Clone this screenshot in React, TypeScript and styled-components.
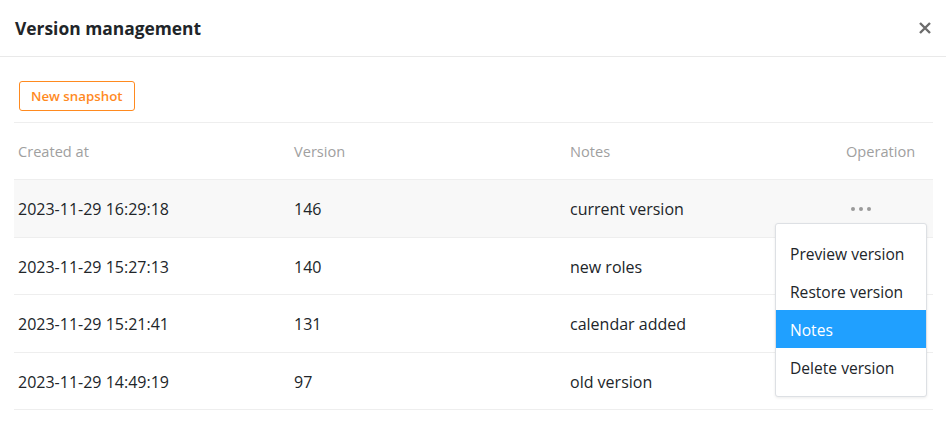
import React from "react";
import styled, { createGlobalStyle } from "styled-components";

const Global = createGlobalStyle`
  html, body { margin: 0; padding: 0; background: #fff; }
  body { font-family: "Open Sans", "Liberation Sans", sans-serif; color: #212529; }
  * { box-sizing: border-box; }
`;

const Dialog = styled.div`
  width: 946px;
  height: 427px;
  background: #fff;
  position: relative;
  overflow: hidden;
`;

const Header = styled.div`
  height: 57px;
  display: flex;
  align-items: center;
  justify-content: space-between;
  padding: 0 14px 0 15px;
  border-bottom: 1px solid #e9e9e9;
`;

const Title = styled.h1`
  margin: 0;
  font-size: 17.4px;
  font-weight: 700;
  color: #212529;
`;

const Close = styled.button`
  border: none;
  background: none;
  padding: 0;
  width: 14px;
  height: 14px;
  display: flex;
  align-items: center;
  justify-content: center;
  cursor: pointer;
`;

const Body = styled.div`
  padding: 24px 13px 0 14px;
`;

const Toolbar = styled.div`
  padding: 0 0 11px 5px;
`;

const SnapshotButton = styled.button`
  height: 30px;
  padding: 0 11px;
  border: 1px solid #ff8a1f;
  border-radius: 3px;
  background: #fff;
  color: #ff8a1f;
  font-family: "Open Sans", "Liberation Sans", sans-serif;
  font-size: 13.3px;
  font-weight: 600;
  cursor: pointer;
`;

const Table = styled.div`
  border-top: 1px solid #eee;
`;

const Row = styled.div<{ $active?: boolean }>`
  display: grid;
  grid-template-columns: 276px 276px 276px 1fr;
  height: 57.5px;
  align-items: center;
  border-bottom: 1px solid #eee;
  background: ${(p) => (p.$active ? "#f8f8f8" : "#fff")};
`;

const HeadRow = styled(Row)`
  height: 57px;
`;

const Cell = styled.div<{ $head?: boolean }>`
  padding: ${(p) => (p.$head ? "0 4px" : "2px 4px 0")};
  font-size: ${(p) => (p.$head ? "14.6px" : "16px")};
  color: ${(p) => (p.$head ? "#a0a0a0" : "#212529")};
  white-space: nowrap;
  position: relative;
`;

const Dots = styled.div`
  display: flex;
  gap: 4px;
  padding-left: 5px;
  span {
    width: 4px;
    height: 4px;
    border-radius: 50%;
    background: #9a9a9a;
  }
`;

const Menu = styled.ul`
  position: absolute;
  left: 775px;
  top: 223px;
  width: 152px;
  margin: 0;
  padding: 10px 0;
  list-style: none;
  background: #fff;
  border: 1px solid #dde0e4;
  border-radius: 3px;
  box-shadow: 0 1px 3px rgba(0, 0, 0, 0.08);
`;

const MenuItem = styled.li<{ $selected?: boolean }>`
  height: 38px;
  line-height: 40px;
  padding: 0 14px;
  font-size: 15.6px;
  white-space: nowrap;
  color: ${(p) => (p.$selected ? "#fff" : "#212529")};
  background: ${(p) => (p.$selected ? "#20a0ff" : "transparent")};
`;

const rows = [
  { at: "2023-11-29 16:29:18", v: "146", n: "current version" },
  { at: "2023-11-29 15:27:13", v: "140", n: "new roles" },
  { at: "2023-11-29 15:21:41", v: "131", n: "calendar added" },
  { at: "2023-11-29 14:49:19", v: "97", n: "old version" },
];

export default function App() {
  return (
    <Dialog>
      <Global />
      <Header>
        <Title>Version management</Title>
        <Close aria-label="close">
          <svg width="12" height="12" viewBox="0 0 12 12">
            <path d="M1 1 L11 11 M11 1 L1 11" stroke="#6c6c6c" strokeWidth="2.4" strokeLinecap="butt" />
          </svg>
        </Close>
      </Header>
      <Body>
        <Toolbar>
          <SnapshotButton>New snapshot</SnapshotButton>
        </Toolbar>
        <Table>
          <HeadRow>
            <Cell $head>Created at</Cell>
            <Cell $head>Version</Cell>
            <Cell $head>Notes</Cell>
            <Cell $head>Operation</Cell>
          </HeadRow>
          {rows.map((r, i) => (
            <Row key={r.at} $active={i === 0}>
              <Cell>{r.at}</Cell>
              <Cell>{r.v}</Cell>
              <Cell>{r.n}</Cell>
              <Cell>
                {i === 0 && (
                  <Dots>
                    <span />
                    <span />
                    <span />
                  </Dots>
                )}
              </Cell>
            </Row>
          ))}
        </Table>
      </Body>
      <Menu>
        <MenuItem>Preview version</MenuItem>
        <MenuItem>Restore version</MenuItem>
        <MenuItem $selected>Notes</MenuItem>
        <MenuItem>Delete version</MenuItem>
      </Menu>
    </Dialog>
  );
}
